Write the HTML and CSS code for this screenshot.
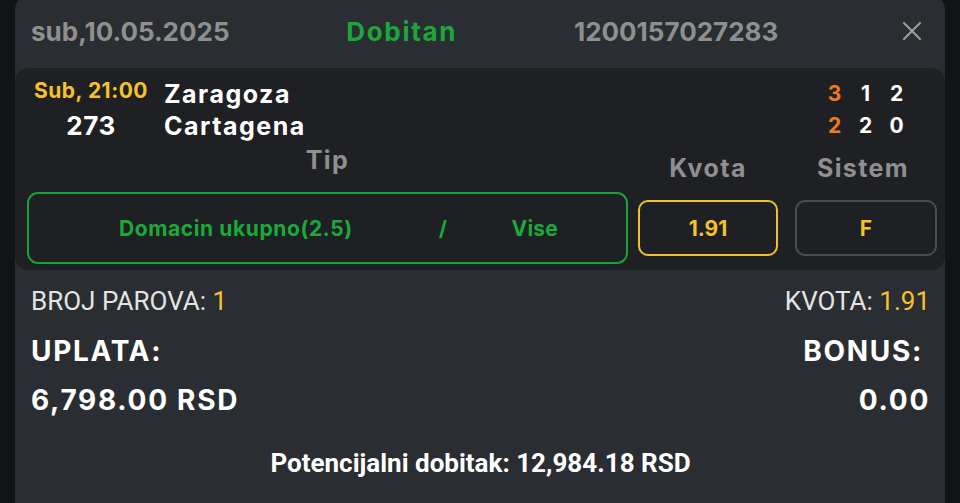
FILE: index.html
```html
<!DOCTYPE html>
<html lang="sr">
<head>
    <meta charset="UTF-8">
    <meta name="viewport" content="width=device-width, initial-scale=1.0">
    <title>Tiket 1200157027283</title>
    <link rel="stylesheet" href="styles.css">
</head>
<body>
    <div class="ticket">
        <div class="ticket-header">
            <span class="date">sub,10.05.2025</span>
            <span class="status">Dobitan</span>
            <span class="ticket-id">1200157027283</span>
            <button class="close" aria-label="Zatvori">
                <svg width="20" height="20" viewBox="0 0 20 20">
                    <path d="M2 2 L18 18 M18 2 L2 18" stroke="#9c9c9c" stroke-width="2.2" stroke-linecap="round"/>
                </svg>
            </button>
        </div>

        <div class="match">
            <div class="match-top">
                <div class="kickoff">
                    <span class="time">Sub, 21:00</span>
                    <span class="code">273</span>
                </div>
                <div class="teams">
                    <span>Zaragoza</span>
                    <span>Cartagena</span>
                </div>
                <div class="scores">
                    <span class="final">3</span><span>1</span><span>2</span>
                    <span class="final">2</span><span>2</span><span>0</span>
                </div>
            </div>

            <div class="bet">
                <div class="bet-col tip-col">
                    <div class="bet-label">Tip</div>
                    <div class="tip-box">
                        <span>Domacin ukupno(2.5)</span>
                        <span class="slash">/</span>
                        <span class="pick">Vise</span>
                    </div>
                </div>
                <div class="bet-col odd-col">
                    <div class="bet-label">Kvota</div>
                    <div class="odd-box">1.91</div>
                </div>
                <div class="bet-col sys-col">
                    <div class="bet-label">Sistem</div>
                    <div class="sys-box">F</div>
                </div>
            </div>
        </div>

        <div class="summary">
            <div class="summary-row info">
                <span>BROJ PAROVA: <em>1</em></span>
                <span>KVOTA: <em>1.91</em></span>
            </div>
            <div class="summary-row big">
                <span>UPLATA:</span>
                <span class="bonus">BONUS:</span>
            </div>
            <div class="summary-row big amount">
                <span>6,798.00 RSD</span>
                <span>0.00</span>
            </div>
            <div class="payout">Potencijalni dobitak: 12,984.18 RSD</div>
        </div>
    </div>
</body>
</html>
```

FILE: styles.css
```css
body {
    margin: 0;
    background-color: #121315;
    font-family: Inter, "DejaVu Sans", sans-serif;
    height: 503px;
    overflow: hidden;
}
.ticket {
    margin: -6px 15px 0 15px;
    background-color: #2a2d31;
    border-radius: 16px 16px 0 0;
    height: 509px;
}
.ticket-header {
    display: flex;
    justify-content: space-between;
    align-items: center;
    height: 74px;
    padding: 0 23px 0 16px;
    font-weight: 700;
    font-size: 26px;
    color: #8f8f8f;
}
.status {
    color: #1aa83b;
    letter-spacing: 1.7px;
}
.ticket-id {
    margin-right: 7px;
}
.close {
    background: none;
    border: none;
    padding: 0;
    display: flex;
    cursor: pointer;
}
.match {
    background-color: #1f2023;
    border-radius: 14px;
    padding: 10px 8px 6px 12px;
}
.match-top {
    display: flex;
    align-items: flex-start;
}
.kickoff {
    display: flex;
    flex-direction: column;
    align-items: center;
    width: 124px;
    margin-left: 2px;
    font-weight: 700;
}
.time {
    color: #f4c22b;
    font-size: 21px;
    line-height: 26px;
    letter-spacing: 0.5px;
}
.code {
    color: #fff;
    font-size: 26px;
    line-height: 44px;
    letter-spacing: 0.5px;
}
.teams {
    display: flex;
    flex-direction: column;
    margin-left: 11px;
    color: #fff;
    font-weight: 700;
    font-size: 25px;
    line-height: 32px;
    letter-spacing: 1.5px;
}
.scores {
    margin-left: auto;
    margin-right: 25px;
    display: grid;
    grid-template-columns: repeat(3, 31px);
    justify-items: center;
    color: #fff;
    font-weight: 700;
    font-size: 21px;
    line-height: 32px;
}
.scores .final {
    color: #ef7b1c;
}
.bet {
    display: flex;
    align-items: center;
    margin-top: -3px;
}
.bet-col {
    display: flex;
    flex-direction: column;
    gap: 17px;
}
.bet-label {
    text-align: center;
    color: #8f8f8f;
    font-weight: 700;
    font-size: 25px;
    line-height: 30px;
    letter-spacing: 1.4px;
}
.tip-col {
    width: 601px;
}
.odd-col {
    width: 140px;
    margin-left: 10px;
}
.sys-col {
    width: 142px;
    margin-left: 17px;
}
.sys-col .bet-label {
    margin-right: 6px;
}
.tip-box {
    display: flex;
    align-items: center;
    height: 72px;
    box-sizing: border-box;
    padding-left: 90px;
    border: 2px solid #16a236;
    border-radius: 11px;
    color: #19ab3a;
    font-weight: 700;
    font-size: 21px;
    letter-spacing: 0.6px;
}
.slash {
    margin-left: 86px;
}
.pick {
    margin-left: 64px;
    letter-spacing: 0.2px;
}
.odd-box, .sys-box {
    display: flex;
    justify-content: center;
    align-items: center;
    height: 56px;
    box-sizing: border-box;
    border-radius: 10px;
    color: #f4c22b;
    font-weight: 700;
    font-size: 21px;
}
.odd-box {
    border: 2px solid #f1c02a;
}
.sys-box {
    border: 2px solid #4c4d50;
}
.summary {
    padding: 14px 15px 0 16px;
}
.summary-row {
    display: flex;
    justify-content: space-between;
}
.summary-row em {
    font-style: normal;
    color: #f4c22b;
}
.info {
    font-family: Roboto, sans-serif;
    font-size: 26px;
    line-height: 34px;
    color: #e4e4e4;
}
.big {
    margin-top: 16px;
    color: #fff;
    font-weight: 700;
    font-size: 28px;
    line-height: 34px;
    letter-spacing: 1.7px;
}
.bonus {
    margin-right: 7px;
}
.amount {
    margin-top: 15px;
}
.payout {
    margin-top: 31px;
    text-align: center;
    font-family: Roboto, sans-serif;
    font-weight: 700;
    font-size: 26px;
    color: #fff;
}
```
